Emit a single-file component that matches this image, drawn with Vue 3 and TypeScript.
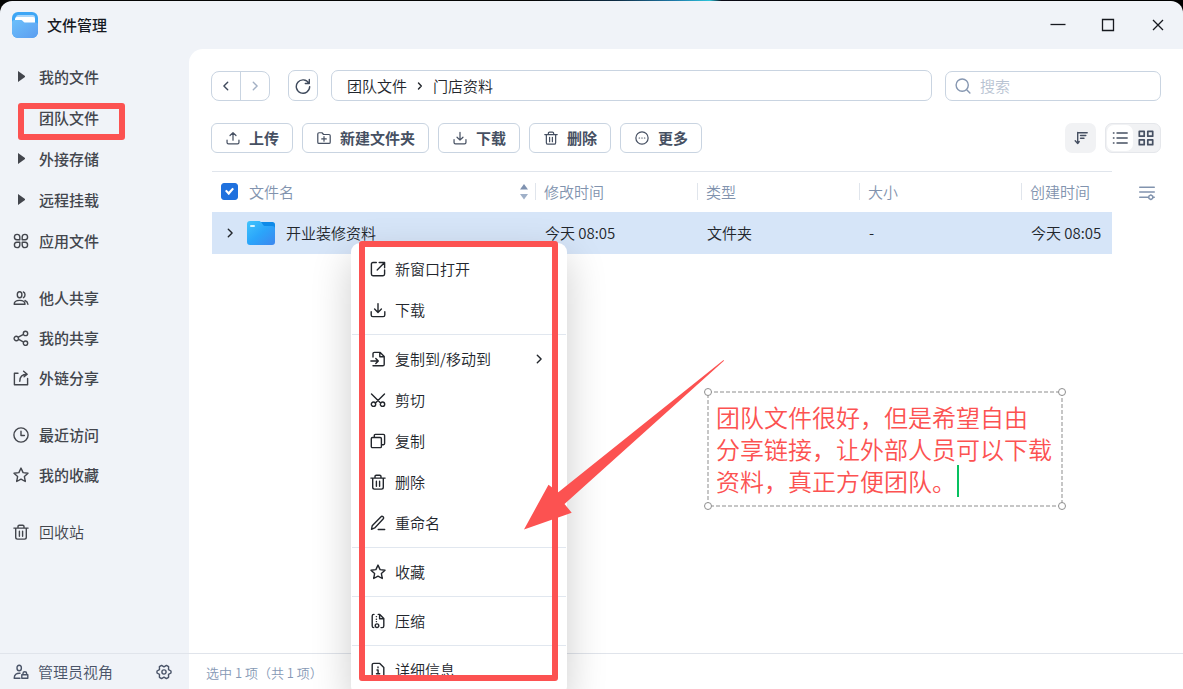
<script setup lang="ts">
import { ref } from 'vue'

interface NavItem {
  label: string
  icon?: string
  expandable?: boolean
  light?: boolean
}

interface MenuItem {
  label: string
  icon: string
  submenu?: boolean
}

const icons: Record<string, string> = {
  apps: 'M6.8 6.8H3.9a2.7 2.7 0 1 1 2.9-2.9zM9.2 6.8h2.9a2.7 2.7 0 1 0-2.9-2.9zM6.8 9.2H3.9a2.7 2.7 0 1 0 2.9 2.9zM9.2 9.2h2.9a2.7 2.7 0 1 1-2.9 2.9z',
  users: 'M6.600 1.800c-1.400 0-2.300 1.100-2.300 2.900s.9 3.100 2.300 3.100 2.300-1.300 2.300-3.100-.9-2.900-2.300-2.900zM10.400 2c1 .3 1.600 1.300 1.600 2.700s-.6 2.500-1.600 3M1.200 14.200c0-2.400 2-3.800 5.400-3.800s5.400 1.400 5.400 3.800zM12 10.500c1.600.6 2.700 1.700 2.900 3.700',
  share: 'M3.300 6.300a2.200 2.200 0 1 0 0 4.400 2.200 2.200 0 0 0 0-4.400zM12.500 1.200a2.200 2.200 0 1 0 0 4.400 2.200 2.200 0 0 0 0-4.400zM12.500 11a2.200 2.200 0 1 0 0 4.400 2.200 2.200 0 0 0 0-4.400zM5.300 7.200l5.200-2.900M5.300 9.200l5.300 3',
  outlink: 'M5 3.200H1.400v11.600h13.200V8.500M6.800 11.300c0-4.500 1.800-7 7.200-7M10.600 1.200L14.200 4.300l-3.100 2.400',
  clock: 'M8 .9a7.100 7.100 0 1 0 0 14.200A7.100 7.100 0 0 0 8 .9zM8 4.200v4.300h3.400',
  star: 'M8 1.100l2.100 4.500 4.900.6-3.600 3.400.9 4.900L8 12.100l-4.300 2.400.9-4.900L1 6.200l4.900-.6z',
  trash: 'M.9 4.100h14.200M5 4V2.500c0-.8.5-1.300 1.300-1.300h3.400c.8 0 1.300.5 1.300 1.300V4M2.700 4.300v9c0 1.100.7 1.800 1.800 1.800h7c1.100 0 1.800-.7 1.800-1.800v-9M6.400 7.200v5M9.600 7.200v5',
  admin: 'M6.200 1.300c-1.400 0-2.200 1-2.200 2.600s.8 2.800 2.200 2.800 2.200-1.200 2.200-2.800-.8-2.600-2.200-2.600zM7 9.200c-3.600-.2-5.700 1.500-5.800 5H7M8.800 10.700h6v3.600h-6zM10 10.500V9.300c0-.9.7-1.500 1.800-1.500s1.800.6 1.800 1.500v1.200',
  gear: 'M5.600 1.400L8 2.900l2.400-1.500 2.200 1.300-.1 2.900L15 7v2l-2.500 1.400.1 2.900-2.200 1.300L8 13.100l-2.400 1.500-2.200-1.300.1-2.900L1 9V7l2.500-1.400-.1-2.900zM8 5.900a2.100 2.100 0 1 0 0 4.200 2.100 2.100 0 0 0 0-4.200z',
  upload: 'M8 10.500V2M4.600 5.200L8 1.900l3.400 3.300M1.200 10.400v2.600c0 1 .6 1.600 1.600 1.600h10.400c1 0 1.600-.6 1.600-1.600v-2.600',
  download: 'M8 1.600v8.700M4.600 7.100L8 10.400l3.400-3.300M1.200 9.800v3.200c0 1 .6 1.600 1.600 1.600h10.400c1 0 1.600-.6 1.600-1.600V9.800',
  folderAdd: 'M.9 3.400c0-.9.5-1.400 1.400-1.400h3.400l1.800 2h6.200c.9 0 1.400.5 1.400 1.400v7.400c0 .9-.5 1.400-1.400 1.400H2.300c-.9 0-1.400-.5-1.400-1.400zM8 6.500v5.200M5.400 9.100h5.200',
  more: 'M8 1a7 7 0 1 0 0 14A7 7 0 0 0 8 1zM4.800 8h.4M7.800 8h.4M10.800 8h.4',
  refresh: 'M13.800 5.200A6.700 6.700 0 1 0 14.700 8.600M14.300 1.500v4h-4',
  search: 'M7.200 1a6.100 6.100 0 1 0 0 12.200A6.100 6.100 0 0 0 7.200 1zM11.700 11.700l3.200 3.200',
  left: 'M9.700 4.200L5.900 8l3.800 3.800',
  right: 'M6.300 4.200L10.100 8l-3.800 3.800',
  sort: 'M4.700 2.500v11M2.200 10.700l2.500 2.800 1.500-2M4.700 2.800h9.500M7.500 5.500h5.300M7.500 8.200h3.500',
  list: 'M5 3h10.200M5 8h10.200M5 13h10.200M1.400 3h.6M1.400 8h.6M1.400 13h.6',
  grid: 'M1.300 1.300h4.900v4.900H1.300zM9.800 1.300h4.900v4.900H9.800zM1.300 9.800h4.900v4.900H1.300zM9.800 9.800h4.900v4.900H9.800z',
  columns: 'M.7 2.300h14.600M.7 7h14.600M.7 12.300h7M11.800 9.900l1.900 1.200v2.300l-1.900 1.200-1.900-1.200v-2.300zM7.700 12.300h2M13.800 12.300h1.500',
  newWindow: 'M6.300 1.500H3c-1 0-1.600.6-1.600 1.600v10c0 1 .6 1.600 1.600 1.600h10c1 0 1.600-.6 1.600-1.600V9M9.200 1.500h5.400v5.300M14.300 1.800L7.200 8.900',
  copyTo: 'M3 6V2.800c0-.9.5-1.400 1.400-1.400h5.800l4 4v8c0 .9-.5 1.400-1.400 1.400H3M9.800 1.500v4.200h4.200M.9 10h7.300M5.800 7.500L8.300 10l-2.500 2.500',
  cut: 'M1.500 2l9.300 9.200M14.500 2l-9.300 9.200M3.500 10a2.200 2.200 0 1 0 0 4.400 2.200 2.200 0 0 0 0-4.400zM12.500 10a2.200 2.200 0 1 0 0 4.400 2.200 2.200 0 0 0 0-4.400z',
  copy: 'M2.500 4.500h7.700c.8 0 1.200.4 1.200 1.200v7.700c0 .8-.4 1.200-1.200 1.200H2.500c-.8 0-1.200-.4-1.200-1.200V5.700c0-.8.4-1.200 1.200-1.200zM4.300 4.300V2.500c0-.7.4-1.100 1.100-1.100h8c.8 0 1.200.4 1.200 1.200v8c0 .7-.4 1.100-1.100 1.100h-1.800',
  rename: 'M1.500 14.300l.7-3.500 8.600-8.900c.7-.7 1.600-.7 2.300-.1.7.7.7 1.600 0 2.300L4.700 12.900zM8.200 14.500h6.500',
  zip: 'M4 1.400H3.800c-1 0-1.600.6-1.600 1.600v10c0 1 .6 1.600 1.600 1.600M8.200 1.400h1.600l4 4V13c0 1-.6 1.600-1.600 1.600h-1.200M9.600 1.500v4.200h4.100M6.300 3.600h.2M6.300 6.200h.2M6.300 8.600h.2M7 10.900a1.800 1.800 0 1 0 0 3.600 1.800 1.800 0 0 0 0-3.600z',
  info: 'M3.800 1.400h6l4 4V13c0 1-.6 1.600-1.600 1.600H3.800c-1 0-1.600-.6-1.600-1.600V3c0-1 .6-1.600 1.600-1.600zM8 5v.8M7 8h1.100v3.600M6.500 11.700h3.200',
}

const navGroups: NavItem[][] = [
  [
    { label: '我的文件', expandable: true },
    { label: '团队文件' },
    { label: '外接存储', expandable: true },
    { label: '远程挂载', expandable: true },
    { label: '应用文件', icon: 'apps' },
  ],
  [
    { label: '他人共享', icon: 'users' },
    { label: '我的共享', icon: 'share' },
    { label: '外链分享', icon: 'outlink' },
  ],
  [
    { label: '最近访问', icon: 'clock' },
    { label: '我的收藏', icon: 'star' },
  ],
  [{ label: '回收站', icon: 'trash', light: true }],
]

const actions: MenuItem[] = [
  { label: '上传', icon: 'upload' },
  { label: '新建文件夹', icon: 'folderAdd' },
  { label: '下载', icon: 'download' },
  { label: '删除', icon: 'trash' },
  { label: '更多', icon: 'more' },
]

const columns: string[] = ['修改时间', '类型', '大小', '创建时间']

const menuGroups: MenuItem[][] = [
  [
    { label: '新窗口打开', icon: 'newWindow' },
    { label: '下载', icon: 'download' },
  ],
  [
    { label: '复制到/移动到', icon: 'copyTo', submenu: true },
    { label: '剪切', icon: 'cut' },
    { label: '复制', icon: 'copy' },
    { label: '删除', icon: 'trash' },
    { label: '重命名', icon: 'rename' },
  ],
  [{ label: '收藏', icon: 'star' }],
  [{ label: '压缩', icon: 'zip' }],
  [{ label: '详细信息', icon: 'info' }],
]

const allSelected = ref<boolean>(true)
const keyword = ref<string>('')
const view = ref<'list' | 'grid'>('list')
const note = ref<string>('团队文件很好，但是希望自由\n分享链接，让外部人员可以下载\n资料，真正方便团队。')
</script>

<template>
  <div class="screen">
    <div class="window">
      <header class="titlebar">
        <svg class="logo" viewBox="0 0 26 26" aria-hidden="true">
          <defs>
            <linearGradient id="logo-front" x1="0" y1="0" x2="1" y2="1">
              <stop offset="0" stop-color="#6cc0fb" />
              <stop offset="1" stop-color="#5c9df0" />
            </linearGradient>
          </defs>
          <rect width="26" height="26" rx="6" fill="#3ea6f5" />
          <rect x="4" y="3" width="19" height="9" rx="2.500" fill="#a9d6fb" />
          <rect x="3" y="5" width="20" height="9" rx="2" fill="#fff" />
          <path d="M0 10.500C0 9 .8 8 2.400 8h6.200c1.200 0 1.700.4 2.400 1.200.7.9 1.300 1.300 2.500 1.300h10c1.700 0 2.500.8 2.500 2V20a6 6 0 0 1-6 6H6a6 6 0 0 1-6-6z" fill="url(#logo-front)" />
        </svg>
        <h1>文件管理</h1>
        <div class="controls">
          <button type="button" aria-label="最小化"><svg viewBox="0 0 16 16"><path d="M.5 7.500h15" /></svg></button>
          <button type="button" aria-label="最大化"><svg viewBox="0 0 16 16"><path d="M2.500 2.500h11v11h-11z" /></svg></button>
          <button type="button" aria-label="关闭"><svg viewBox="0 0 16 16"><path d="M3 3l10 10M13 3L3 13" /></svg></button>
        </div>
      </header>

      <div class="body">
        <aside class="sidebar">
          <nav class="nav">
            <ul v-for="(group, g) in navGroups" :key="g" :class="{ tall: g === 0 }">
              <li v-for="item in group" :key="item.label">
                <a href="#" :class="{ light: item.light }">
                  <svg v-if="item.icon" class="icon" viewBox="0 0 16 16"><path :d="icons[item.icon]" /></svg>
                  <span v-else class="slot"><i v-if="item.expandable" class="caret"></i></span>
                  {{ item.label }}
                </a>
              </li>
            </ul>
          </nav>
          <div class="side-foot">
            <button type="button" class="admin">
              <svg class="icon" viewBox="0 0 16 16"><path :d="icons.admin" /></svg>管理员视角
            </button>
            <button type="button" class="settings" aria-label="设置">
              <svg class="icon" viewBox="0 0 16 16"><path :d="icons.gear" /></svg>
            </button>
          </div>
        </aside>

        <main class="main">
          <div class="content">
            <div class="location">
              <div class="history">
                <button type="button" aria-label="后退"><svg class="icon" viewBox="0 0 16 16"><path :d="icons.left" /></svg></button>
                <button type="button" aria-label="前进" disabled><svg class="icon" viewBox="0 0 16 16"><path :d="icons.right" /></svg></button>
              </div>
              <button type="button" class="refresh" aria-label="刷新"><svg class="icon" viewBox="0 0 16 16"><path :d="icons.refresh" /></svg></button>
              <nav class="crumbs" aria-label="路径">
                <a href="#">团队文件</a>
                <svg class="icon" viewBox="0 0 16 16"><path d="M6.500 5L9.300 8l-2.800 3" /></svg>
                <a href="#">门店资料</a>
              </nav>
              <label class="search">
                <svg class="icon" viewBox="0 0 16 16"><path :d="icons.search" /></svg>
                <input v-model="keyword" type="text" placeholder="搜索" aria-label="搜索" />
              </label>
            </div>

            <div class="toolbar">
              <button v-for="action in actions" :key="action.label" type="button" class="action">
                <svg class="icon" viewBox="0 0 16 16"><path :d="icons[action.icon]" /></svg>{{ action.label }}
              </button>
              <button type="button" class="sort" aria-label="排序"><svg class="icon" viewBox="0 0 16 16"><path :d="icons.sort" /></svg></button>
              <div class="views">
                <button type="button" aria-label="列表" :class="{ active: view === 'list' }" @click="view = 'list'"><svg class="icon" viewBox="0 0 16 16"><path :d="icons.list" /></svg></button>
                <button type="button" aria-label="网格" :class="{ active: view === 'grid' }" @click="view = 'grid'"><svg class="icon bold" viewBox="0 0 16 16"><path :d="icons.grid" /></svg></button>
              </div>
            </div>

            <div class="files">
              <table>
                <colgroup>
                  <col />
                  <col class="mid" /><col class="mid" /><col class="mid" />
                  <col class="last" />
                </colgroup>
                <thead>
                  <tr>
                    <th>
                      <div class="name-head">
                        <input v-model="allSelected" type="checkbox" aria-label="全选" />
                        <span>文件名</span>
                        <svg class="sorter" viewBox="0 0 8 18"><path d="M0 6.500L4 1l4 5.500z" fill="#7f92b0" /><path d="M0 11h8l-4 5.500z" fill="#9fb0c8" /></svg>
                      </div>
                    </th>
                    <th v-for="column in columns" :key="column"><span class="head">{{ column }}</span></th>
                  </tr>
                </thead>
                <tbody>
                  <tr>
                    <td>
                      <div class="name-cell">
                        <svg class="icon" viewBox="0 0 16 16"><path :d="icons.right" /></svg>
                        <svg class="folder" viewBox="0 0 28 26" aria-hidden="true">
                          <defs>
                            <linearGradient id="folder-front" x1="0" y1="0" x2="1" y2="1">
                              <stop offset="0" stop-color="#41c4fc" />
                              <stop offset=".5" stop-color="#2ba5fa" />
                              <stop offset="1" stop-color="#3d86ee" />
                            </linearGradient>
                          </defs>
                          <path d="M13 2h12.500C27 2 28 3 28 4.500V9H13z" fill="#0e8ae8" />
                          <path d="M0 4c0-2 1-3 3-3h8.500c1.500 0 2.200.5 3 1.600l1.300 1.900c.7 1 1.400 1.500 2.800 1.500H25c2 0 3 1 3 3v13c0 2-1 3-3 3H3c-2 0-3-1-3-3z" fill="url(#folder-front)" />
                          <rect x="3" y="5" width="5" height="2" rx="1" fill="#d5f3ff" />
                        </svg>
                        <span>开业装修资料</span>
                      </div>
                    </td>
                    <td>今天 08:05</td>
                    <td>文件夹</td>
                    <td>-</td>
                    <td>今天 08:05</td>
                  </tr>
                </tbody>
              </table>
              <button type="button" class="column-settings" aria-label="列设置"><svg class="icon" viewBox="0 0 16 16"><path :d="icons.columns" /></svg></button>
            </div>
          </div>
          <footer class="status">选中 1 项（共 1 项）</footer>
        </main>
      </div>
    </div>

    <div class="context-menu" role="menu">
      <div v-for="(group, g) in menuGroups" :key="g" class="menu-group">
        <button v-for="item in group" :key="item.label" type="button" role="menuitem">
          <svg class="icon" viewBox="0 0 16 16"><path :d="icons[item.icon]" /></svg>
          <span>{{ item.label }}</span>
          <svg v-if="item.submenu" class="icon" viewBox="0 0 16 16"><path :d="icons.right" /></svg>
        </button>
      </div>
    </div>

    <div class="mark mark-nav"></div>
    <div class="mark mark-menu"></div>
    <svg class="arrow" viewBox="0 0 200 170" aria-hidden="true">
      <path d="M0 169.500L24.500 124.700l9.800 7.600L199.500 0l.5.700L40.500 144l7.200 8.700z" fill="#fc5251" />
    </svg>
    <div class="note">
      <svg class="frame" aria-hidden="true"><rect x="0" y="0" width="100%" height="100%" /></svg>
      <i class="handle tl"></i><i class="handle tr"></i><i class="handle bl"></i><i class="handle br"></i>
      <textarea v-model="note" aria-label="批注" rows="3" spellcheck="false"></textarea>
      <i class="text-caret"></i>
    </div>
  </div>
</template>

<style>
html,
body {
  margin: 0;
  background: #000;
}
</style>

<style scoped>
.screen {
  position: relative;
  display: flex;
  height: 100vh;
  box-sizing: border-box;
  padding-top: 1px;
  overflow: hidden;
  background: linear-gradient(90deg, #050505 45%, #0d2a42 52%, #1d78a8 57%, #2cc4da 60%, #0a0a16 61%, #000 70%);
  color: #22262c;
  font-family: "Noto Sans CJK SC", "Noto Sans", sans-serif;
  font-size: 15px;
  font-weight: 350;
  line-height: 20px;
}
.screen * {
  box-sizing: border-box;
}
button {
  display: flex;
  align-items: center;
  justify-content: center;
  margin: 0;
  padding: 0;
  border: 0;
  background: none;
  color: inherit;
  font: inherit;
}
a {
  color: inherit;
  text-decoration: none;
}
svg {
  display: block;
  flex: none;
}
.icon {
  width: 16px;
  height: 16px;
  fill: none;
  stroke: currentColor;
  stroke-width: 1.4;
  stroke-linecap: round;
  stroke-linejoin: round;
}
.icon.bold {
  stroke-width: 1.7;
}
.window {
  display: flex;
  flex: 1;
  flex-direction: column;
  min-width: 0;
  border-radius: 12px 12px 0 0;
  background: #f0f3f8;
}
.titlebar {
  display: flex;
  flex: none;
  align-items: center;
  height: 48px;
  padding-left: 12px;
}
.logo {
  width: 26px;
  height: 26px;
}
h1 {
  margin: 0 0 0 9px;
  font-size: 15px;
  font-weight: 500;
  color: #16191f;
}
.controls {
  display: flex;
  margin-left: auto;
}
.controls button {
  width: 50px;
  height: 48px;
}
.controls svg {
  width: 16px;
  height: 16px;
  fill: none;
  stroke: #16191f;
  stroke-width: 1.3;
}
.body {
  display: flex;
  flex: 1;
  min-height: 0;
}
.sidebar {
  display: flex;
  flex: none;
  flex-direction: column;
  width: 189px;
  color: #43464d;
}
.nav {
  display: flex;
  flex: 1;
  flex-direction: column;
  gap: 17px;
  padding: 7px 13px;
}
ul {
  margin: 0;
  padding: 0;
  list-style: none;
}
.nav a {
  display: flex;
  align-items: center;
  gap: 10px;
  height: 40px;
  font-weight: 500;
}
.nav .tall a {
  height: 41px;
}
.nav a.light {
  font-weight: 350;
}
.slot {
  width: 16px;
  padding-left: 5px;
}
.caret {
  display: block;
  width: 7px;
  height: 11px;
  background: currentColor;
  clip-path: polygon(0 0, 100% 45%, 100% 55%, 0 100%);
}
.side-foot {
  display: flex;
  align-items: center;
  justify-content: space-between;
  height: 36px;
  padding: 0 17px 0 13px;
  border-top: 1px solid #e0e4eb;
  color: #4a5468;
}
.side-foot .admin {
  gap: 9px;
}
.main {
  display: flex;
  flex: 1;
  flex-direction: column;
  min-width: 0;
  border-radius: 14px 0 0 0;
  background: #fff;
}
.content {
  flex: 1;
  padding: 21px 22px 0;
}
.location {
  display: flex;
  align-items: flex-end;
  gap: 13px;
}
.history {
  display: flex;
  height: 30px;
  margin-right: 5px;
  border: 1px solid #c9d4e1;
  border-radius: 8px;
  color: #3f4a5c;
}
.history button {
  width: 28px;
}
.history button + button {
  width: 29px;
  border-left: 1px solid #c9d4e1;
  color: #a3b0c4;
}
.refresh {
  width: 30px;
  height: 31px;
  border: 1px solid #c9d4e1;
  border-radius: 7px;
  color: #3f4a5c;
}
.crumbs {
  display: flex;
  flex: 1;
  align-items: center;
  gap: 5px;
  height: 31px;
  padding: 0 15px;
  border: 1px solid #c9d4e1;
  border-radius: 7px;
}
.search {
  display: flex;
  align-items: center;
  gap: 9px;
  width: 216px;
  height: 30px;
  padding: 0 9px;
  border: 1px solid #c9d4e1;
  border-radius: 7px;
  color: #8697b1;
}
.search input {
  flex: 1;
  min-width: 0;
  padding: 0;
  border: 0;
  outline: 0;
  background: none;
  color: #22262c;
  font: inherit;
}
.search input::placeholder {
  color: #b8c3d2;
}
.toolbar {
  display: flex;
  gap: 9px;
  margin-top: 22px;
  color: #465062;
}
.action {
  gap: 9px;
  height: 30px;
  padding: 0 13px 0 14px;
  border: 1px solid #c9d4e1;
  border-radius: 6px;
  font-weight: 700;
}
.action .icon {
  width: 14px;
  height: 14px;
}
.sort {
  width: 31px;
  height: 30px;
  margin-left: auto;
  border-radius: 7px;
  background: #f1f2f4;
}
.views {
  display: flex;
  align-items: center;
  height: 30px;
  padding: 0 1px;
  border: 1px solid #e5e7eb;
  border-radius: 7px;
  background: #f1f2f4;
}
.views button {
  width: 26px;
  height: 26px;
  border-radius: 7px;
}
.views .active {
  background: #fff;
}
.files {
  display: flex;
  align-items: flex-start;
  margin: 18px 0 0 1px;
}
table {
  flex: 1;
  min-width: 0;
  border-collapse: collapse;
  table-layout: fixed;
}
.mid {
  width: 162px;
}
.last {
  width: 91px;
}
th {
  height: 40px;
  padding: 0;
  border-top: 1px solid #e0e5ec;
  color: #8193ae;
  font-weight: 350;
  text-align: left;
}
.name-head {
  display: flex;
  align-items: center;
  gap: 11px;
  padding: 0 7px 0 9px;
}
.name-head input {
  position: relative;
  width: 17px;
  height: 17px;
  margin: 0;
  border: 1px solid #c9d4e1;
  border-radius: 3px;
  appearance: none;
}
.name-head input:checked {
  border-color: #1f71de;
  background: #1f71de;
}
.name-head input:checked::after {
  position: absolute;
  inset: 3px 3px 4px;
  background: #fff;
  clip-path: polygon(0 48%, 17% 30%, 40% 56%, 82% 5%, 100% 22%, 42% 100%);
  content: "";
}
.sorter {
  width: 8px;
  height: 18px;
  margin-left: auto;
}
.head {
  display: block;
  padding-left: 8px;
  border-left: 1px solid #e0e5ec;
  line-height: 17px;
}
td {
  height: 42px;
  padding: 0 0 0 10px;
  background: #d6e5f8;
  white-space: nowrap;
}
td:first-child {
  padding: 0;
}
.name-cell {
  display: flex;
  align-items: center;
  padding-left: 10px;
}
.folder {
  width: 28px;
  height: 26px;
  margin: 0 11px 0 9px;
}
.column-settings {
  width: 16px;
  margin: 14px 6px 0 27px;
  color: #8193ae;
}
.status {
  height: 36px;
  padding: 9px 17px;
  border-top: 1px solid #e0e4eb;
  color: #8699b5;
  font-size: 13px;
}
.context-menu {
  position: absolute;
  top: 243px;
  left: 351px;
  width: 216px;
  padding: 5px 1px;
  border-radius: 9px;
  background: #fff;
  box-shadow: 0 14px 40px rgba(0, 0, 0, 0.2);
}
.menu-group + .menu-group {
  margin-top: 4px;
  padding-top: 3px;
  border-top: 1px solid #e1e7ef;
}
.context-menu button {
  justify-content: flex-start;
  width: 100%;
  height: 41px;
  padding: 0 19px 0 18px;
}
.context-menu span {
  flex: 1;
  padding-left: 9px;
  text-align: left;
}
.mark {
  position: absolute;
  border: 6px solid #fc5251;
  border-radius: 3px;
  pointer-events: none;
}
.mark-nav {
  top: 103px;
  left: 18px;
  width: 107px;
  height: 37px;
}
.mark-menu {
  top: 241px;
  left: 359px;
  width: 199px;
  height: 440px;
}
.arrow {
  position: absolute;
  top: 360px;
  left: 524px;
  width: 200px;
  height: 170px;
  pointer-events: none;
}
.note {
  position: absolute;
  top: 392px;
  left: 708px;
  width: 354px;
  height: 114px;
}
.frame {
  position: absolute;
  inset: 0;
  width: 100%;
  height: 100%;
  overflow: visible;
}
.frame rect {
  fill: none;
  stroke: #c6c6c6;
  stroke-width: 2;
  stroke-dasharray: 4 2;
}
.handle {
  position: absolute;
  width: 8px;
  height: 8px;
  border: 1px solid #8f8f8f;
  border-radius: 50%;
  background: #fff;
}
.tl {
  top: -4px;
  left: -4px;
}
.tr {
  top: -4px;
  right: -4px;
}
.bl {
  bottom: -4px;
  left: -4px;
}
.br {
  right: -4px;
  bottom: -4px;
}
textarea {
  position: relative;
  display: block;
  width: 100%;
  height: 100%;
  padding: 9px 0 0 8px;
  border: 0;
  outline: 0;
  overflow: hidden;
  background: none;
  color: #fc5251;
  font: inherit;
  font-size: 24px;
  line-height: 32px;
  resize: none;
}
.text-caret {
  position: absolute;
  top: 73px;
  left: 249px;
  width: 2px;
  height: 32px;
  background: #07c160;
}
</style>
